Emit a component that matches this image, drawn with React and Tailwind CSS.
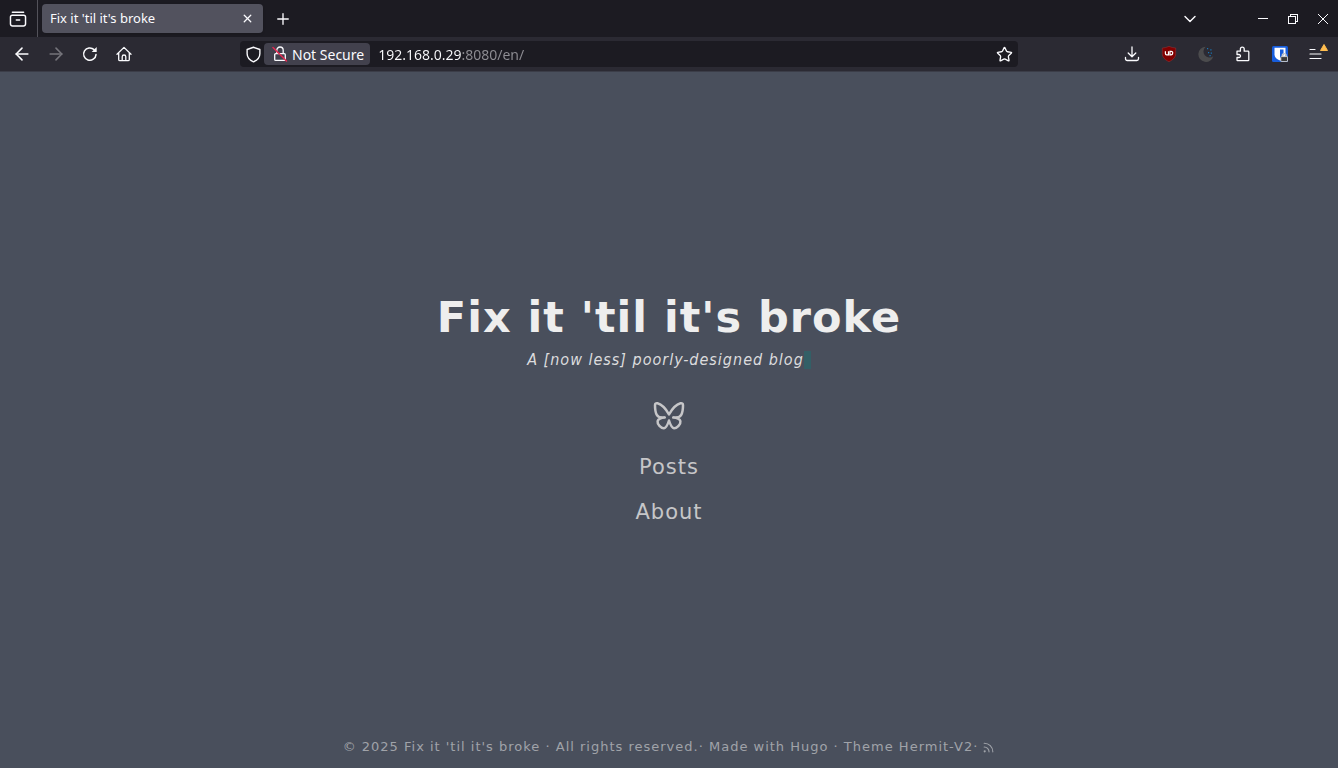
import { ArrowLeft, ArrowRight, ChevronDown, Plus, Rss, Star, X } from 'lucide-react';

const ICON_BUTTON = 'flex h-7 items-center justify-center';

function Svg({ size = 16, children }) {
  return (
    <svg
      width={size}
      height={size}
      viewBox="0 0 16 16"
      fill="none"
      stroke="currentColor"
      strokeWidth="1.3"
      strokeLinecap="round"
      strokeLinejoin="round"
      aria-hidden="true"
    >
      {children}
    </svg>
  );
}

function TabBar() {
  return (
    <div className="flex h-[37px] items-center bg-[#1c1b22] text-[#fbfbfe]">
      <button type="button" aria-label="Firefox View" className="flex h-full w-[38px] items-center justify-center border-r border-[#53525a] pr-px">
        <Svg size={18}>
          <path d="M3 2h10M2.9 4.6h10.2a1.6 1.6 0 0 1 1.6 1.6v6.2a1.8 1.8 0 0 1-1.8 1.8H3.1a1.8 1.8 0 0 1-1.8-1.8V6.2a1.6 1.6 0 0 1 1.6-1.6zM6.5 8.800h3" />
        </Svg>
      </button>

      <div className="ml-1 flex h-[29px] w-[221px] items-center justify-between rounded bg-[#52525e] px-2 shadow">
        <span className="text-[13px]">Fix it 'til it's broke</span>
        <button type="button" aria-label="Close tab" className="flex size-4 items-center justify-center">
          <X size={13} strokeWidth={2.4} />
        </button>
      </div>

      <button type="button" aria-label="New tab" className={`${ICON_BUTTON} w-10`}>
        <Plus size={18} strokeWidth={1.8} />
      </button>

      <div className="ml-auto flex items-center">
        <button type="button" aria-label="List all tabs" className={`${ICON_BUTTON} mr-10 w-9`}>
          <ChevronDown size={20} strokeWidth={1.7} />
        </button>
        <button type="button" aria-label="Minimize" className={`${ICON_BUTTON} w-[30px]`}>
          <svg width="10" height="10" stroke="currentColor" shapeRendering="crispEdges"><path d="M0 4.500h10" /></svg>
        </button>
        <button type="button" aria-label="Restore" className={`${ICON_BUTTON} w-[30px]`}>
          <svg width="10" height="10" fill="none" stroke="currentColor" shapeRendering="crispEdges"><path d="M.5 2.500h7v7h-7zM2.500 2.500v-2h7v7h-2" /></svg>
        </button>
        <button type="button" aria-label="Close window" className={`${ICON_BUTTON} w-[30px]`}>
          <svg width="10" height="10" stroke="currentColor"><path d="M0 0l10 10M10 0L0 10" /></svg>
        </button>
      </div>
    </div>
  );
}

function AddressBar() {
  return (
    <div className="mr-[95px] ml-[99px] flex h-[26px] min-w-0 flex-1 items-center rounded bg-[#1c1b22]">
      <button type="button" aria-label="Tracking protection" className={`${ICON_BUTTON} w-6 pl-0.5`}>
        <Svg size={17}>
          <path d="M8 1.200l6 2.100v3.900c0 3.300-2.400 6-6 7.700-3.600-1.700-6-4.400-6-7.700V3.300z" />
        </Svg>
      </button>
      <button type="button" className="flex h-[22px] shrink-0 items-center gap-1 rounded bg-[#42414d] pr-1.5 pl-2">
        <Svg>
          <path d="M3.700 7.700h8.600a1 1 0 0 1 1 1v4.700a1 1 0 0 1-1 1H3.700a1 1 0 0 1-1-1V8.700a1 1 0 0 1 1-1zM4.800 7.500V4.200a3.200 3.200 0 0 1 6.400 0v3.300" />
          <path d="M1 1.500l13.500 13.500" stroke="#e22850" strokeWidth="1.500" />
        </Svg>
        <span className="text-[14px]">Not Secure</span>
      </button>
      {/* host is bright, port and path are dimmed */}
      <input
        type="text"
        aria-label="Search or enter address"
        className="ml-2 h-[22px] min-w-0 flex-1 bg-linear-to-r from-[#fbfbfe] from-[84px] to-[#8f8e94] to-[84px] bg-clip-text text-[14px] text-transparent outline-none"
        defaultValue="192.168.0.29:8080/en/"
      />
      <button type="button" aria-label="Bookmark this page" className={`${ICON_BUTTON} w-7`}>
        <Star size={17} strokeWidth={1.9} />
      </button>
    </div>
  );
}

function NavBar() {
  return (
    <div className="flex h-[35px] items-center border-b border-[#3b3d48] bg-[#2b2a33] pr-[3px] pl-[5px] text-[#fbfbfe]">
      <button type="button" aria-label="Back" className={`${ICON_BUTTON} w-[34px]`}>
        <ArrowLeft size={20} strokeWidth={1.9} />
      </button>
      <button type="button" aria-label="Forward" disabled className={`${ICON_BUTTON} w-[34px] text-[#75747b]`}>
        <ArrowRight size={20} strokeWidth={1.9} />
      </button>
      <button type="button" aria-label="Reload" className={`${ICON_BUTTON} w-[34px]`}>
        <Svg>
          <path d="M14 8.600a6.200 6.200 0 1 1-1.900-5" strokeWidth="1.500" />
          <path d="M14.700 1v5h-5z" fill="currentColor" stroke="none" />
        </Svg>
      </button>
      <button type="button" aria-label="Home" className={`${ICON_BUTTON} w-[34px]`}>
        <Svg>
          <path d="M1 8.200L8 1.400l7 6.800M2.700 6.800v6.600a1.300 1.300 0 0 0 1.300 1.300h8a1.300 1.300 0 0 0 1.300-1.300V6.800M6.200 14.500v-3.700a1.800 1.800 0 0 1 3.600 0v3.700" />
        </Svg>
      </button>

      <AddressBar />

      <button type="button" aria-label="Downloads" className={`${ICON_BUTTON} w-[37px]`}>
        <Svg>
          <path d="M8 1v9.500M4.200 7L8 10.800 11.800 7M1.500 11.500v1.300a1.700 1.700 0 0 0 1.700 1.700h9.600a1.700 1.700 0 0 0 1.700-1.700v-1.300" />
        </Svg>
      </button>
      <button type="button" aria-label="uBlock Origin" className={`${ICON_BUTTON} w-[37px]`}>
        <svg width="16" height="16" viewBox="0 0 16 16" fill="none" aria-hidden="true">
          <path d="M8 .3c2 1 4.200 1.600 6.700 1.700v5.500c0 4-3 6.500-6.700 8.200C4.300 14 1.300 11.500 1.300 7.500V2C3.800 1.900 6 1.300 8 .3z" fill="#800000" stroke="#9b3438" strokeWidth=".5" />
          <path d="M4.400 5.300v2.300a1.300 1.300 0 0 0 1.300 1.300h1.800V5.300M9 5.300h1.200a1.500 1.500 0 0 1 1.500 1.800c-.1 1.100-.7 1.800-1.700 1.800H9z" stroke="#fff" strokeWidth="1.200" />
        </svg>
      </button>
      <button type="button" aria-label="Dark mode" className={`${ICON_BUTTON} w-[37px]`}>
        <svg width="16" height="16" viewBox="0 0 16 16" aria-hidden="true">
          <path d="M7.800.7a5.900 5.900 0 0 0 7.500 9.500A7.600 7.600 0 1 1 7.800.7z" fill="#4b4b4d" />
          <path d="M9 2h1.200v1.200H9zM12.300 3.200h1.200v1.200h-1.200zM10 6h1.200v1.200H10zM12.700 6.500h1.200v1.200h-1.200zM11.500 9h1.200v1.200h-1.200z" fill="#1a78b8" />
        </svg>
      </button>
      <button type="button" aria-label="Extensions" className={`${ICON_BUTTON} w-[37px]`}>
        <Svg>
          <path d="M2 5.200h3.400V3.100a1.900 1.900 0 0 1 3.800 0v2.100H13a.8.8 0 0 1 .8.8v7.900a.8.8 0 0 1-.8.8H2.800a.8.8 0 0 1-.8-.8v-2.400h2a1.500 1.500 0 0 0 0-3H2z" />
        </Svg>
      </button>
      <button type="button" aria-label="Bitwarden" className={`${ICON_BUTTON} w-[37px]`}>
        <svg width="16" height="16" viewBox="0 0 16 16" aria-hidden="true">
          <rect width="16" height="16" rx="1.500" fill="#175ddc" />
          <path d="M2.500 1.800h11v7c0 2.500-2.500 4.600-5.500 5.800-3-1.200-5.500-3.300-5.500-5.800z" fill="#fff" />
          <path d="M8 3.500h3.500v5c0 1.500-1.500 2.800-3.500 3.800z" fill="#175ddc" />
          <path d="M10.300 11V9.500a1.900 1.900 0 0 1 3.800 0V11" fill="none" stroke="#c9c9c9" strokeWidth="1.400" />
          <rect x="8.800" y="10.600" width="6.800" height="5" rx=".6" fill="#3c3c3c" stroke="#d9d9d9" strokeWidth=".9" />
        </svg>
      </button>
      <button type="button" aria-label="Open application menu" className={`${ICON_BUTTON} relative w-[37px] pr-0.5`}>
        <svg width="14" height="12" stroke="currentColor" strokeWidth="1.200" strokeLinecap="round" aria-hidden="true">
          <path d="M1 1.500h5M1 6h11M1 10.500h11" />
        </svg>
        <svg width="8" height="7" className="absolute top-1 right-[7px]" aria-hidden="true">
          <path d="M4 .5L7.500 6.500h-7z" fill="#ffbd4f" stroke="#ffbd4f" strokeLinejoin="round" />
        </svg>
      </button>
    </div>
  );
}

function Butterfly() {
  return (
    <svg
      width="32"
      height="32"
      viewBox="0 0 32 32"
      fill="none"
      stroke="currentColor"
      strokeWidth="2.500"
      strokeLinecap="round"
      strokeLinejoin="round"
      aria-hidden="true"
    >
      <path d="M16 14.500C13.500 10 9 4.500 4.500 3.300 3 2.900 2 3.600 2 5.200c0 3.500.6 7.500 1.800 9.600 1.200 2.200 3.700 3.200 8 2.700-4.200.4-6.800 1.300-7.200 3.700-.5 3 3.300 7.200 6.400 7 2.500-.2 4-4.500 5-7.700 1 3.200 2.500 7.500 5 7.700 3.100.2 6.900-4 6.400-7-.4-2.400-3-3.300-7.200-3.700 4.300.5 6.800-.5 8-2.700C29.400 12.700 30 8.700 30 5.200c0-1.600-1-2.300-2.500-1.900C23 4.500 18.500 10 16 14.500z" />
    </svg>
  );
}

export default function App() {
  return (
    <div className="flex min-h-screen flex-col bg-[#494f5c] font-['Noto_Sans','Open_Sans',sans-serif]">
      <header>
        <TabBar />
        <NavBar />
      </header>

      <div className="flex flex-1 flex-col items-center font-['DejaVu_Sans',sans-serif] tracking-[1px] text-[#c6c6c8]">
        <main className="flex flex-1 flex-col items-center justify-center pt-4">
          <h1 className="text-[43px] leading-[52px] font-bold text-[#eee]">Fix it 'til it's broke</h1>
          <p className="mt-[5px] flex items-center font-['DejaVu_Sans_Condensed','DejaVu_Sans',sans-serif] text-base leading-6 text-[#dcdcde] italic">
            A [now less] poorly-designed blog
            <span className="h-[18px] w-[7px] bg-[#335f66]" />
          </p>
          <a href="#bluesky" aria-label="Bluesky" className="mt-7">
            <Butterfly />
          </a>
          <nav className="mt-[13px] flex flex-col items-center text-[21px] leading-[45px]">
            <a href="#posts">Posts</a>
            <a href="#about">About</a>
          </nav>
        </main>

        <footer className="flex items-center pb-[11px] text-[13px] leading-5 text-[#a0a3a9]">
          <span>
            © 2025 <a href="#home">Fix it 'til it's broke</a> · All rights reserved.· Made with <a href="#hugo">Hugo</a> · Theme{' '}
            <a href="#theme">Hermit-V2</a>·
          </span>
          <a href="#rss" aria-label="RSS" className="ml-1">
            <Rss size={13} strokeWidth={2} />
          </a>
        </footer>
      </div>
    </div>
  );
}
